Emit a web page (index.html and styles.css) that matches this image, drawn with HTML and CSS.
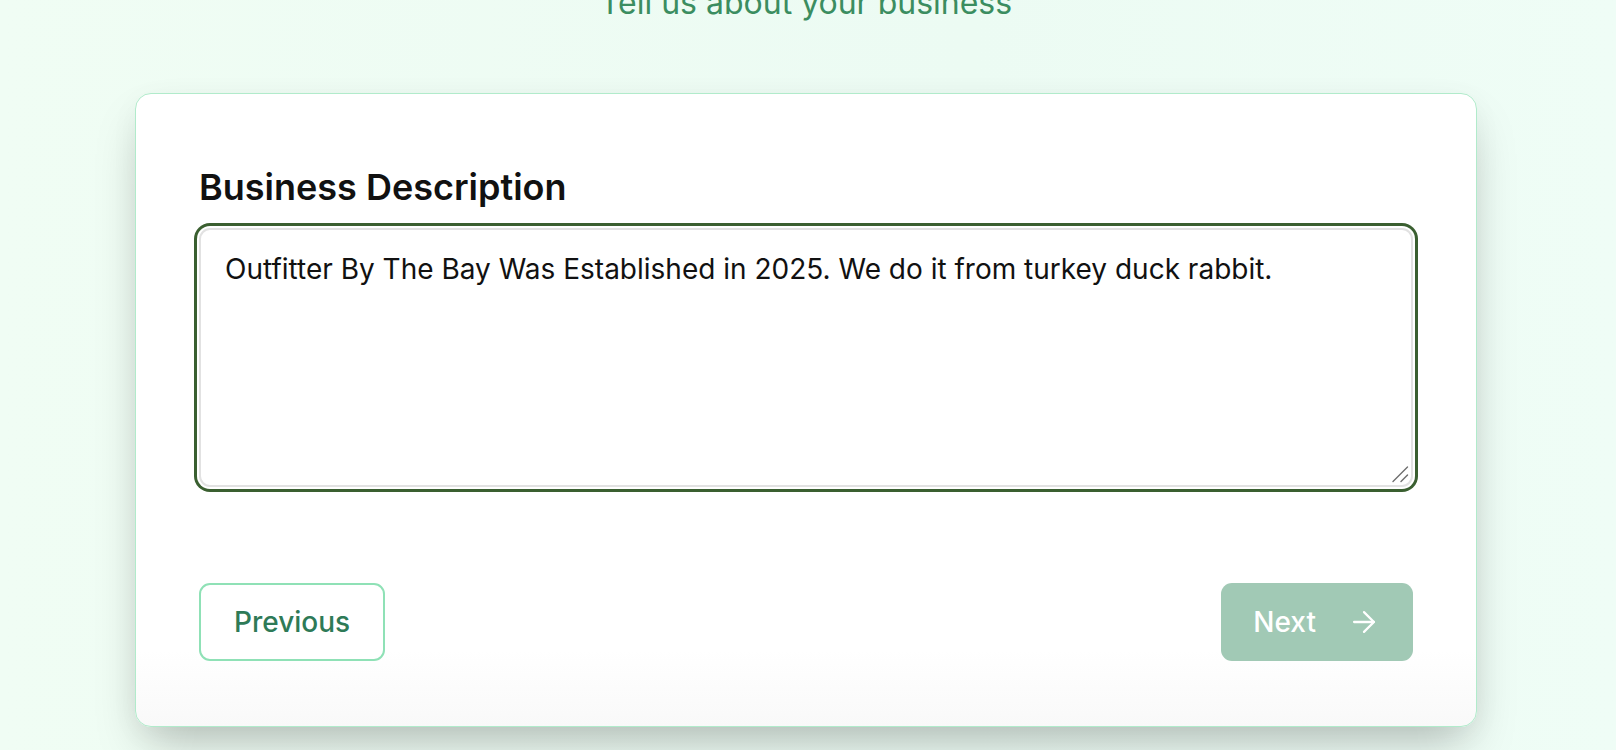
FILE: index.html
```html
<!DOCTYPE html>
<html lang="en">
<head>
<meta charset="utf-8">
<title>Business Description</title>
<link rel="stylesheet" href="styles.css">
</head>
<body>
<main class="page">
  <p class="subtitle">Tell us about your business</p>
  <section class="card">
    <label class="field-label" for="desc">Business Description</label>
    <div class="field">
      <textarea id="desc" class="textarea">Outfitter By The Bay Was Established in 2025. We do it from turkey duck rabbit.</textarea>
      <svg class="grip" viewBox="0 0 18 18" fill="none" stroke="#6f6f6f" stroke-width="1.4" stroke-linecap="round"><path d="M2 16.5 16.5 2"/><path d="M10 16.5 16.5 10"/></svg>
    </div>
    <div class="actions">
      <button class="btn btn-outline" type="button">Previous</button>
      <button class="btn btn-primary" type="button">
        <span>Next</span>
        <svg class="icon" viewBox="0 0 24 24" fill="none" stroke="currentColor" stroke-width="1.6" stroke-linecap="round" stroke-linejoin="round"><path d="M5 12h14"/><path d="m12 5 7 7-7 7"/></svg>
      </button>
    </div>
  </section>
</main>
</body>
</html>
```

FILE: styles.css
```css
* { box-sizing: border-box; }
html, body { margin: 0; padding: 0; }
body {
  width: 1616px;
  height: 750px;
  overflow: hidden;
  font-family: Inter, "Noto Sans", sans-serif;
  background: linear-gradient(90deg, #f0fdf4 0%, #ecfbf3 60%, #effdf6 100%);
}
.page {
  display: flex;
  flex-direction: column;
  padding-left: 135px;
  margin-top: -17px;
}
.subtitle {
  margin: 0;
  width: 1342px;
  text-align: center;
  font-size: 32px;
  line-height: 40px;
  color: #3b8d60;
}
.card {
  margin-top: 70px;
  width: 1342px;
  height: 634px;
  background: linear-gradient(180deg, #ffffff 88%, #f9f9f9 100%);
  border: 1px solid #b1ebcb;
  border-radius: 16px;
  padding: 73px 63px 65px 63px;
  display: flex;
  flex-direction: column;
  box-shadow: 0 25px 50px -12px rgba(0, 0, 0, 0.25), 0 8px 30px rgba(0, 0, 0, 0.04);
}
.field-label {
  display: block;
  font-size: 36px;
  line-height: 40px;
  font-weight: 600;
  color: #111111;
  margin-bottom: 21px;
}
.field {
  display: flex;
  position: relative;
}
.textarea {
  flex: 1;
  height: 259px;
  border: 2px solid #e2e2e2;
  border-radius: 11px;
  padding: 20px 24px 16px;
  font-family: Inter, "Noto Sans", sans-serif;
  font-size: 28px;
  line-height: 39px;
  color: #111111;
  background: #ffffff;
  resize: none;
  outline: none;
  box-shadow: 0 0 0 2px #ffffff, 0 0 0 5px #3a5f30;
}
.grip {
  position: absolute;
  right: 4px;
  bottom: 4px;
  width: 18px;
  height: 18px;
  pointer-events: none;
}
.actions {
  margin-top: 96px;
  display: flex;
  justify-content: space-between;
  align-items: center;
}
.btn {
  height: 78px;
  border-radius: 11px;
  font-family: Inter, "Noto Sans", sans-serif;
  font-size: 28px;
  font-weight: 500;
  display: flex;
  align-items: center;
  cursor: pointer;
}
.btn-outline {
  padding: 0 33px;
  background: #ffffff;
  border: 2px solid #8fe1b6;
  color: #2e7a57;
}
.btn-primary {
  padding: 0 32px;
  gap: 31px;
  background: #a1c9b5;
  border: none;
  color: #ffffff;
}
.icon { width: 34px; height: 34px; }
```
